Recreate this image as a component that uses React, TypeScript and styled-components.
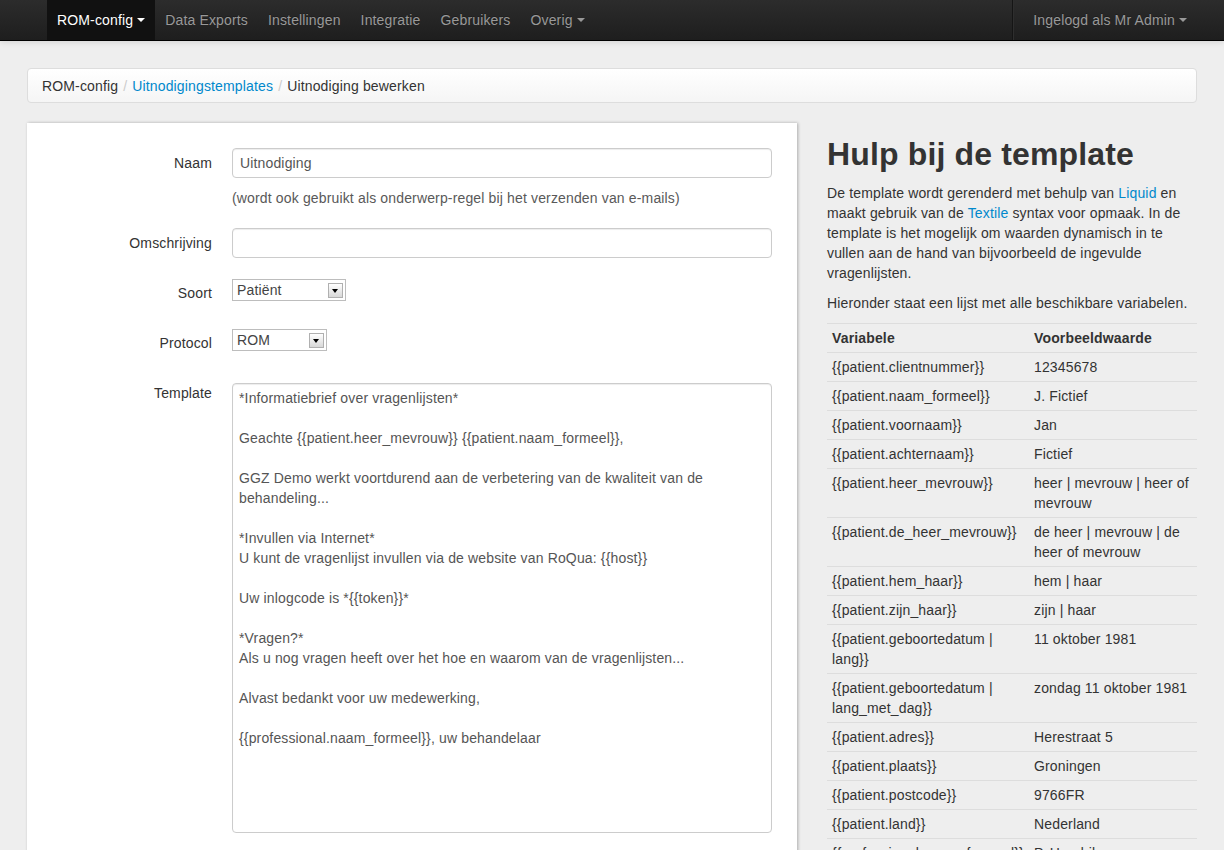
import styled, { createGlobalStyle } from "styled-components";

const GlobalStyle = createGlobalStyle`
  html, body {
    margin: 0;
    padding: 0;
    overflow: hidden;
  }
  body {
    background: #eeeeee;
    font-family: "Liberation Sans", Arial, Helvetica, sans-serif;
    font-size: 14px;
    line-height: 20px;
    letter-spacing: 0.15px;
    color: #333333;
  }
`;

const variables: [string, string][] = [
  ["{{patient.clientnummer}}", "12345678"],
  ["{{patient.naam_formeel}}", "J. Fictief"],
  ["{{patient.voornaam}}", "Jan"],
  ["{{patient.achternaam}}", "Fictief"],
  ["{{patient.heer_mevrouw}}", "heer | mevrouw | heer of mevrouw"],
  ["{{patient.de_heer_mevrouw}}", "de heer | mevrouw | de heer of mevrouw"],
  ["{{patient.hem_haar}}", "hem | haar"],
  ["{{patient.zijn_haar}}", "zijn | haar"],
  ["{{patient.geboortedatum | lang}}", "11 oktober 1981"],
  ["{{patient.geboortedatum | lang_met_dag}}", "zondag 11 oktober 1981"],
  ["{{patient.adres}}", "Herestraat 5"],
  ["{{patient.plaats}}", "Groningen"],
  ["{{patient.postcode}}", "9766FR"],
  ["{{patient.land}}", "Nederland"],
  ["{{professional.naam_formeel}}", "P. Hendriks"],
];

const templateText = `*Informatiebrief over vragenlijsten*

Geachte {{patient.heer_mevrouw}} {{patient.naam_formeel}},

GGZ Demo werkt voortdurend aan de verbetering van de kwaliteit van de behandeling...

*Invullen via Internet*
U kunt de vragenlijst invullen via de website van RoQua: {{host}}

Uw inlogcode is *{{token}}*

*Vragen?*
Als u nog vragen heeft over het hoe en waarom van de vragenlijsten...

Alvast bedankt voor uw medewerking,

{{professional.naam_formeel}}, uw behandelaar`;

const App = () => {
  return (
    <>
      <GlobalStyle />
      <Navbar>
        <NavInner>
          <Nav>
            <NavLink $active>
              ROM-config <Caret $light />
            </NavLink>
            <NavLink>Data Exports</NavLink>
            <NavLink>Instellingen</NavLink>
            <NavLink>Integratie</NavLink>
            <NavLink>Gebruikers</NavLink>
            <NavLink>
              Overig <Caret />
            </NavLink>
          </Nav>
          <Nav>
            <Divider />
            <NavLink>
              Ingelogd als Mr Admin <Caret />
            </NavLink>
          </Nav>
        </NavInner>
      </Navbar>

      <Container>
        <Breadcrumb>
          <Crumb>ROM-config</Crumb>
          <Sep>/</Sep>
          <Link>Uitnodigingstemplates</Link>
          <Sep>/</Sep>
          <Crumb>Uitnodiging bewerken</Crumb>
        </Breadcrumb>

        <Columns>
          <FormPanel>
            <FormRow>
              <Label>Naam</Label>
              <div>
                <TextInput defaultValue="Uitnodiging" />
                <HelpBlock>(wordt ook gebruikt als onderwerp-regel bij het verzenden van e-mails)</HelpBlock>
              </div>
            </FormRow>
            <FormRow>
              <Label>Omschrijving</Label>
              <TextInput defaultValue="" />
            </FormRow>
            <FormRow $tall>
              <Label>Soort</Label>
              <Select $w={114}>
                <span>Patiënt</span>
                <SelectButton />
              </Select>
            </FormRow>
            <FormRow $tall>
              <Label>Protocol</Label>
              <Select $w={95}>
                <span>ROM</span>
                <SelectButton />
              </Select>
            </FormRow>
            <FormRow>
              <Label>Template</Label>
              <TextArea defaultValue={templateText} />
            </FormRow>
          </FormPanel>

          <Sidebar>
            <Heading>Hulp bij de template</Heading>
            <Para>
              De template wordt gerenderd met behulp van <Link>Liquid</Link> en maakt gebruik van de{" "}
              <Link>Textile</Link> syntax voor opmaak. In de template is het mogelijk om waarden dynamisch in te
              vullen aan de hand van bijvoorbeeld de ingevulde vragenlijsten.
            </Para>
            <Para>Hieronder staat een lijst met alle beschikbare variabelen.</Para>
            <Table>
              <colgroup>
                <col style={{ width: 202 }} />
                <col />
              </colgroup>
              <thead>
                <tr>
                  <Th>Variabele</Th>
                  <Th>Voorbeeldwaarde</Th>
                </tr>
              </thead>
              <tbody>
                {variables.map(([name, value]) => (
                  <tr key={name}>
                    <Td>{name}</Td>
                    <Td>{value}</Td>
                  </tr>
                ))}
              </tbody>
            </Table>
          </Sidebar>
        </Columns>
      </Container>
    </>
  );
};

export default App;

const Navbar = styled.div`
  height: 40px;
  background: linear-gradient(to bottom, #2c2c2c, #1e1e1e);
  border-bottom: 1px solid #000;
  box-shadow: 0 1px 6px rgba(0, 0, 0, 0.12);
`;

const NavInner = styled.div`
  width: 1170px;
  margin: 0 auto;
  display: flex;
  justify-content: space-between;
  height: 40px;
`;

const Nav = styled.div`
  display: flex;
  align-items: stretch;
  padding-left: 20px;
`;

const NavLink = styled.div<{ $active?: boolean }>`
  padding: 10px 10px;
  line-height: 20px;
  font-size: 14px;
  color: ${(p) => (p.$active ? "#ffffff" : "#999999")};
  background: ${(p) => (p.$active ? "#111111" : "transparent")};
  text-shadow: 0 -1px 0 rgba(0, 0, 0, 0.25);
  white-space: nowrap;
  cursor: pointer;
`;

const Caret = styled.b<{ $light?: boolean }>`
  display: inline-block;
  width: 0;
  height: 0;
  vertical-align: top;
  margin-top: 8px;
  border-top: 4px solid ${(p) => (p.$light ? "#ffffff" : "#999999")};
  border-left: 4px solid transparent;
  border-right: 4px solid transparent;
`;

const Divider = styled.div`
  width: 0;
  height: 40px;
  margin-right: 9px;
  border-left: 1px solid #151515;
  border-right: 1px solid #2e2e2e;
`;

const Container = styled.div`
  width: 1170px;
  margin: 0 auto;
  padding-top: 27px;
`;

const Breadcrumb = styled.div`
  display: flex;
  align-items: center;
  height: 33px;
  padding: 0 14px;
  margin-bottom: 20px;
  background: linear-gradient(to bottom, #ffffff, #f5f5f5);
  border: 1px solid #dddddd;
  border-radius: 4px;
  box-shadow: inset 0 1px 0 #ffffff;
`;

const Crumb = styled.span`
  color: #333333;
`;

const Sep = styled.span`
  color: #cccccc;
  padding: 0 5px;
`;

const Link = styled.a`
  color: #0088cc;
  text-decoration: none;
  cursor: pointer;
`;

const Columns = styled.div`
  display: flex;
  align-items: flex-start;
`;

const FormPanel = styled.div`
  width: 720px;
  min-height: 780px;
  padding: 25px 25px 40px;
  background: #ffffff;
  box-shadow: 1px 0 3px rgba(0, 0, 0, 0.28);
`;

const FormRow = styled.div<{ $tall?: boolean }>`
  display: grid;
  grid-template-columns: 160px 540px;
  column-gap: 20px;
  min-height: ${(p) => (p.$tall ? "30px" : "0")};
  margin-bottom: 20px;
`;

const Label = styled.label`
  text-align: right;
  padding-top: 5px;
  color: #333333;
`;

const TextInput = styled.input`
  box-sizing: border-box;
  display: block;
  width: 540px;
  height: 30px;
  padding: 4px 7px;
  font-family: "Liberation Sans", Arial, sans-serif;
  font-size: 14px;
  line-height: 20px;
  letter-spacing: 0.15px;
  color: #555555;
  background: #ffffff;
  border: 1px solid #cccccc;
  border-radius: 4px;
  box-shadow: inset 0 1px 1px rgba(0, 0, 0, 0.075);
  outline: none;
`;

const HelpBlock = styled.div`
  margin-top: 10px;
  color: #595959;
`;

const Select = styled.div<{ $w: number }>`
  box-sizing: border-box;
  width: ${(p) => p.$w}px;
  height: 22px;
  margin-top: 1px;
  padding: 0 4px;
  display: flex;
  align-items: center;
  justify-content: space-between;
  background: #ffffff;
  border: 1px solid #bdbdbd;
  color: #444444;
  font-size: 14px;
`;

const SelectButton = styled.span`
  position: relative;
  width: 13px;
  height: 13px;
  margin-right: -2px;
  border: 1px solid #b0b0b0;
  background: linear-gradient(to bottom, #ffffff, #d8d8d8);

  &::after {
    content: "";
    position: absolute;
    left: 3px;
    top: 5px;
    border-top: 4px solid #000;
    border-left: 3.5px solid transparent;
    border-right: 3.5px solid transparent;
  }
`;

const TextArea = styled.textarea`
  box-sizing: border-box;
  display: block;
  width: 540px;
  height: 450px;
  margin: 5px 0 0;
  padding: 4px 6px;
  font-family: "Liberation Sans", Arial, sans-serif;
  font-size: 14px;
  line-height: 20px;
  letter-spacing: 0.15px;
  color: #555555;
  border: 1px solid #cccccc;
  border-radius: 4px;
  box-shadow: inset 0 1px 1px rgba(0, 0, 0, 0.075);
  resize: none;
  outline: none;
  overflow: hidden;
`;

const Sidebar = styled.div`
  width: 370px;
  padding-left: 30px;
`;

const Heading = styled.h2`
  margin: 11px 0 9px;
  font-size: 32px;
  line-height: 40px;
  font-weight: bold;
  color: #333333;
`;

const Para = styled.p`
  margin: 0 0 10px;
`;

const Table = styled.table`
  width: 100%;
  border-collapse: collapse;
  table-layout: fixed;
`;

const Th = styled.th`
  text-align: left;
  font-weight: bold;
  padding: 4px 5px;
  line-height: 20px;
  border-top: 1px solid #dddddd;
  vertical-align: top;
`;

const Td = styled.td`
  padding: 4px 5px;
  line-height: 20px;
  border-top: 1px solid #dddddd;
  vertical-align: top;
`;
